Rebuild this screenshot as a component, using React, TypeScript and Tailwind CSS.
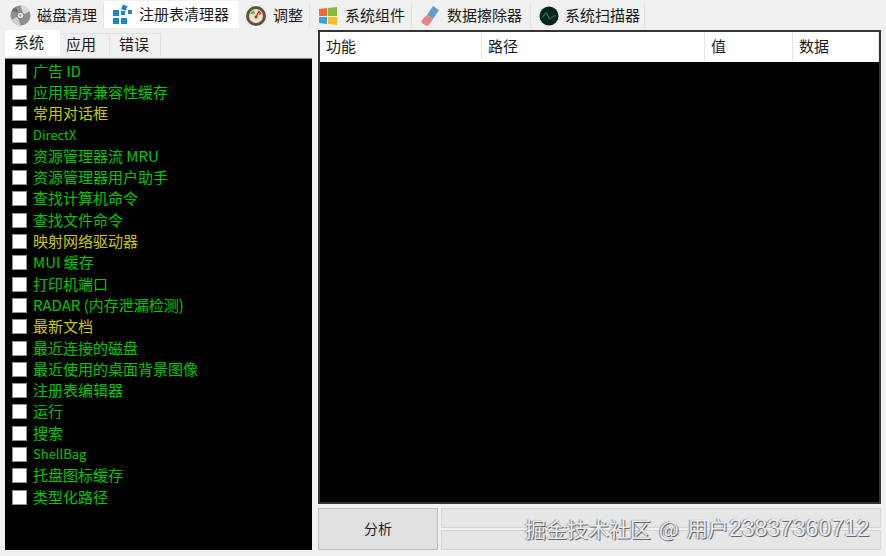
const font = "font-['Noto_Sans_CJK_SC','Liberation_Sans',sans-serif]";

const DiscIcon = () => (
  <svg width="21" height="21" viewBox="0 0 22 22">
    <circle cx="11" cy="11" r="10.5" fill="#8f8f8f" />
    <path d="M11 .5a10.5 10.5 0 0 1 9.5 6L14 10z" fill="#d9d9d9" />
    <path d="M11 21.500a10.500 10.500 0 0 1-9.500-6L8 12z" fill="#cfcfcf" />
    <path d="M1.500 6.500A10.500 10.500 0 0 1 6 2l3 6z" fill="#6f6f6f" />
    <circle cx="11" cy="11" r="3.500" fill="#f5f5f5" stroke="#777" />
    <circle cx="11" cy="11" r="1.200" fill="#888" />
  </svg>
);

const RegistryIcon = () => (
  <svg width="22" height="22" viewBox="0 0 22 22" fill="#1b87c9">
    <rect x="1" y="6" width="6" height="6" />
    <rect x="1" y="14" width="6" height="6" />
    <rect x="9" y="14" width="6" height="6" />
    <rect x="9" y="7" width="4" height="4" />
    <rect x="10" y="1" width="5" height="5" transform="rotate(20 12 3)" />
    <rect x="16" y="6" width="4" height="4" />
  </svg>
);

const GaugeIcon = () => (
  <svg width="22" height="22" viewBox="0 0 22 22">
    <circle cx="11" cy="11" r="10" fill="#5b5346" />
    <circle cx="11" cy="11" r="7" fill="#f1e2c0" />
    <path d="M5 9a6.500 6.500 0 0 1 4-3.500l1 3z" fill="#4fae57" />
    <path d="M13 5.200a6.500 6.500 0 0 1 4 3.800l-3 1z" fill="#e2533c" />
    <path d="M11 12l3-6" stroke="#c8322a" strokeWidth="1.500" />
    <circle cx="11" cy="12" r="1.500" fill="#555" />
  </svg>
);

const WindowsIcon = () => (
  <svg width="20" height="20" viewBox="0 0 20 20">
    <path d="M1 3l8-1v8H1z" fill="#ee6c3a" />
    <path d="M10 2l9-1v9h-9z" fill="#83b93f" />
    <path d="M1 11h8v7l-8-1z" fill="#2fa5e6" />
    <path d="M10 11h9v8l-9-1z" fill="#fbbc25" />
  </svg>
);

const EraserIcon = () => (
  <svg width="20" height="22" viewBox="0 0 20 22">
    <path d="M13 1l6 4-6 9-6-4z" fill="#5f9fd6" />
    <path d="M7 10l6 4-4 6q-2 1-4 0l-3-2q-1-2 0-3z" fill="#e58283" />
  </svg>
);

const ScannerIcon = () => (
  <svg width="20" height="20" viewBox="0 0 20 20" fill="none">
    <circle cx="10" cy="10" r="9.500" fill="#07251a" />
    <path d="M3 11c2 0 2-4 4-4s2 6 4 6 2-4 6-3" stroke="#2f9b4a" />
  </svg>
);

const topTabs = [
  { label: "磁盘清理", icon: <DiscIcon />, width: "w-[101px]", gap: "gap-[6px] pl-[7px]" },
  { label: "注册表清理器", icon: <RegistryIcon />, width: "w-[135px]", gap: "gap-[5px] pl-[8px]", active: true },
  { label: "调整", icon: <GaugeIcon />, width: "w-[71px]", gap: "gap-[6px] pl-[6px]" },
  { label: "系统组件", icon: <WindowsIcon />, width: "w-[102px]", gap: "gap-[7px] pl-[8px]" },
  { label: "数据擦除器", icon: <EraserIcon />, width: "w-[119px]", gap: "gap-[7px] pl-[8px]" },
  { label: "系统扫描器", icon: <ScannerIcon />, width: "w-[114px]", gap: "gap-[6px] pl-[8px]" },
];

const items = [
  { label: "广告 ID" },
  { label: "应用程序兼容性缓存" },
  { label: "常用对话框", warn: true },
  { label: "DirectX", latin: true },
  { label: "资源管理器流 MRU" },
  { label: "资源管理器用户助手" },
  { label: "查找计算机命令" },
  { label: "查找文件命令" },
  { label: "映射网络驱动器", warn: true },
  { label: "MUI 缓存" },
  { label: "打印机端口" },
  { label: "RADAR (内存泄漏检测)" },
  { label: "最新文档", warn: true },
  { label: "最近连接的磁盘" },
  { label: "最近使用的桌面背景图像" },
  { label: "注册表编辑器" },
  { label: "运行" },
  { label: "搜索" },
  { label: "ShellBag", latin: true },
  { label: "托盘图标缓存" },
  { label: "类型化路径" },
];

const columns = [
  { label: "功能", width: "w-[162px]" },
  { label: "路径", width: "w-[223px]" },
  { label: "值", width: "w-[88px]" },
  { label: "数据", width: "flex-1" },
];

export default function App() {
  return (
    <div className={`relative flex h-[556px] w-[886px] flex-col overflow-hidden bg-[#f0f0f0] text-[15px] text-[#1a1a1a] ${font}`}>
      <div className="flex h-[28px] items-end pl-[3px] pt-[1px]">
        {topTabs.map((t) => (
          <div
            key={t.label}
            className={`flex items-center ${t.width} ${t.gap} ${
              t.active ? "h-[27px] bg-white" : "h-[25px] border-r border-[#e2e2e2] bg-[#f0f0f0]"
            }`}
          >
            {t.icon}
            <span className="pb-[2px] leading-none">{t.label}</span>
          </div>
        ))}
      </div>

      <div className="flex min-h-0 flex-1 gap-[6px] pl-[5px] pr-[5px] pb-[6px] pt-[2px]">
        <div className="flex w-[307px] flex-col gap-[2px]">
          <div className="flex h-[26px] items-end">
            <div className="flex h-[26px] w-[55px] items-center bg-white pb-[4px] pl-[9px] leading-none">系统</div>
            <div className="flex h-[23px] w-[50px] items-center border-r border-t border-[#e0e0e0] pb-[3px] pl-[6px] leading-none">应用</div>
            <div className="flex h-[23px] w-[51px] items-center border-r border-t border-[#e0e0e0] pb-[3px] pl-[9px] leading-none">错误</div>
          </div>
          <div className="flex-1 border-t border-[#8a8a8a] bg-black pl-[7px] pt-[1.5px]">
            {items.map((item) => (
              <label key={item.label} className="flex h-[21.3px] items-center gap-[6px]">
                <input
                  type="checkbox"
                  className="h-[15px] w-[15px] shrink-0 appearance-none border border-[#8f8f8f] bg-white"
                />
                <span
                  className={`whitespace-nowrap pb-[2px] leading-none ${item.latin ? "text-[13px]" : "text-[15px]"} ${
                    item.warn ? "text-[#c8c800]" : "text-[#00c800]"
                  }`}
                >
                  {item.label}
                </span>
              </label>
            ))}
          </div>
        </div>

        <div className="flex min-w-0 flex-1 flex-col gap-[4px]">
          <div className="flex flex-1 flex-col border-2 border-[#333] bg-black">
            <div className="flex h-[30px] bg-white">
              {columns.map((c) => (
                <div key={c.label} className={`flex items-center border-r border-[#e5e5e5] pb-[3px] pl-[6px] leading-none ${c.width}`}>
                  {c.label}
                </div>
              ))}
            </div>
          </div>
          <div className="flex h-[42px] gap-[3px]">
            <button className="h-full w-[120px] border border-[#bdbdbd] bg-[#e1e1e1] pb-[2px] text-[14px] leading-none">分析</button>
            <div className="flex flex-1 flex-col gap-[2px]">
              <div className="flex-1 border border-[#d4d4d4] bg-[#e6e6e6]" />
              <div className="flex-1 border border-[#d4d4d4] bg-[#e6e6e6]" />
            </div>
          </div>
        </div>
      </div>

      <div className="absolute left-[525px] top-[512px] flex items-center gap-[8px] whitespace-nowrap text-[21px] leading-[30px] text-[#ececec] [text-shadow:1px_1px_0_#666,-1px_0_1px_#888]">
        <span>掘金技术社区</span>
        <span>@</span>
        <span>
          用户<span className="font-['Liberation_Sans',sans-serif] text-[23px]">23837360712</span>
        </span>
      </div>
    </div>
  );
}
